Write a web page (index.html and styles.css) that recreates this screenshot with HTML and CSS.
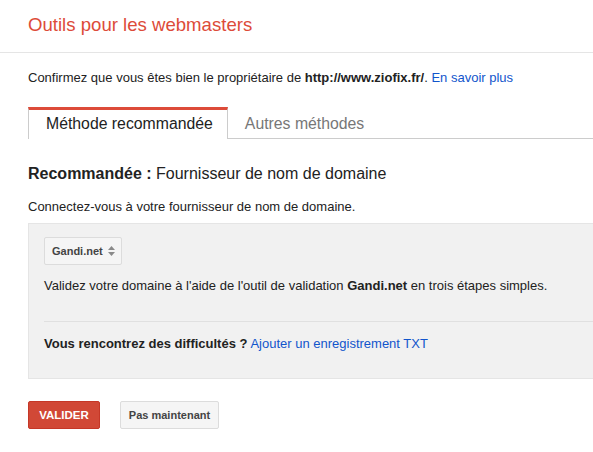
FILE: index.html
```html
<!doctype html>
<html lang="fr">
<head>
	<meta charset="UTF-8">
	<title>Outils pour les webmasters</title>
	<link rel="stylesheet" href="styles.css">
</head>
<body>
	<div class="header">
		<h1 class="title">Outils pour les webmasters</h1>
	</div>
	<div class="main">
		<p class="intro">Confirmez que vous êtes bien le propriétaire de <b>http://www.ziofix.fr/</b>. <a href="#">En savoir plus</a></p>
		<ul class="tabs">
			<li class="tab active">Méthode recommandée</li>
			<li class="tab">Autres méthodes</li>
		</ul>
		<h2 class="method"><b>Recommandée :</b> Fournisseur de nom de domaine</h2>
		<p class="hint">Connectez-vous à votre fournisseur de nom de domaine.</p>
		<div class="box">
			<div class="select">Gandi.net
				<svg width="7" height="10" viewBox="0 0 7 10"><path d="M3.5 0L7 4H0z M3.5 10L0 6h7z" fill="#8a8a8a"/></svg>
			</div>
			<p class="steps">Validez votre domaine à l'aide de l'outil de validation <b>Gandi.net</b> en trois étapes simples.</p>
			<div class="trouble"><b>Vous rencontrez des difficultés ?</b> <a href="#">Ajouter un enregistrement TXT</a></div>
		</div>
		<div class="actions">
			<button class="btn btn-red">VALIDER</button>
			<button class="btn btn-grey">Pas maintenant</button>
		</div>
	</div>
</body>
</html>
```

FILE: styles.css
```css
*{
	margin: 0;
	padding: 0;
	box-sizing: border-box;
}
body{
	font-family: "Liberation Sans", Arial, sans-serif;
	font-size: 13px;
	color: #222;
	background: #fff;
}
a{
	color: #15c;
	text-decoration: none;
}
.header{
	height: 53px;
	border-bottom: 1px solid #e5e5e5;
	padding: 13px 0 0 28px;
}
.title{
	font-size: 18.6px;
	font-weight: normal;
	line-height: 24px;
	color: #dd4b39;
}
.main{
	padding-left: 28px;
}
.intro{
	margin-top: 17px;
	line-height: 16px;
}
.tabs{
	list-style: none;
	display: flex;
	margin-top: 21px;
	border-bottom: 1px solid #ccc;
	height: 32px;
}
.tab{
	font-size: 15.8px;
	line-height: 28px;
	padding: 0 17px;
	color: #777;
	border-top: 3px solid transparent;
}
.tab.active{
	color: #222;
	background: #fff;
	border: 1px solid #ccc;
	border-top: 3px solid #dd4b39;
	border-bottom: none;
	height: 32px;
	padding: 0 14px 0 17px;
}
.method{
	font-size: 16px;
	font-weight: normal;
	line-height: 20px;
	margin-top: 25px;
}
.hint{
	margin-top: 15px;
	line-height: 16px;
}
.box{
	margin-top: 8px;
	background: #f1f1f1;
	border: 1px solid #e5e5e5;
	border-right: none;
	padding: 13px 0 0 15px;
	height: 156px;
}
.select{
	display: inline-flex;
	align-items: center;
	gap: 5px;
	height: 28px;
	padding: 0 6px 0 7px;
	border: 1px solid #dcdcdc;
	border-radius: 2px;
	background: #f5f5f5;
	font-size: 11px;
	font-weight: bold;
	color: #444;
}
.steps{
	margin-top: 13px;
	line-height: 16px;
}
.trouble{
	margin-top: 27px;
	border-top: 1px solid #e0e0e0;
	padding-top: 14px;
	line-height: 16px;
}
.actions{
	display: flex;
	gap: 20px;
	margin-top: 22px;
}
.btn{
	height: 28px;
	font-family: inherit;
	font-size: 11px;
	font-weight: bold;
	border-radius: 2px;
	white-space: nowrap;
}
.btn-red{
	width: 72px;
	font-size: 11.5px;
	color: #fff;
	background: #d14836;
	border: 1px solid #c53727;
}
.btn-grey{
	width: 99px;
	color: #444;
	background: #f5f5f5;
	border: 1px solid #dcdcdc;
}
```
